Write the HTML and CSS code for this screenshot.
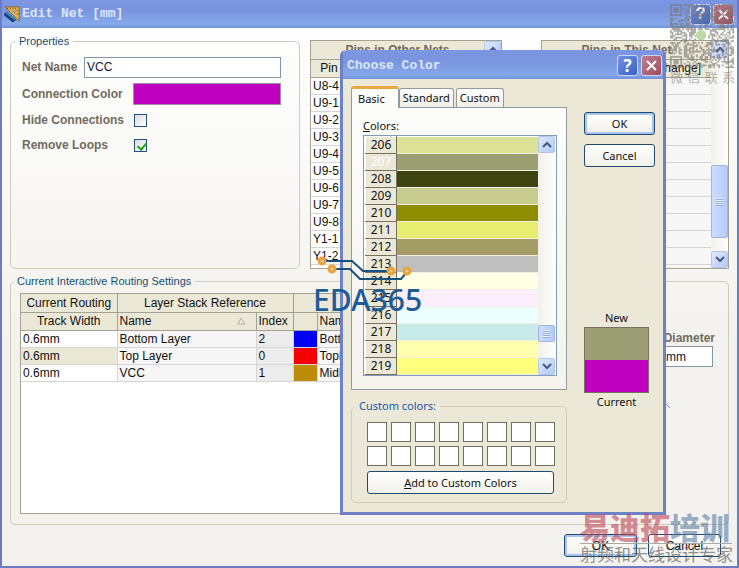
FILE: index.html
```html
<!DOCTYPE html>
<html lang="en">
<head>
  <meta charset="UTF-8">
  <meta name="viewport" content="width=device-width, initial-scale=1.0">
  <title>Edit Net [mm]</title>
  <link rel="stylesheet" href="styles.css">
</head>
<body>
  <div class="window">
    <header class="titlebar">
      <svg class="app-icon" width="16" height="16" viewBox="0 0 18 18">
        <path d="M1 1H17V17Z" fill="#e3b64c" stroke="#8a6420"/>
        <path d="M9 5H13V9Z" fill="#7f92d8"/>
        <path d="M4 2v2M7 2v2M10 2v2M13 2v2M16 5h-2M16 9h-2" stroke="#7a5518"/>
        <path d="M1 8L12 17" stroke="#16406e" stroke-width="5"/>
        <path d="M2 7L12 15" stroke="#3c8ac4" stroke-width="2"/>
      </svg>
      <h1>Edit Net [mm]</h1>
      <button class="title-button" aria-label="Help">?</button>
      <button class="title-button close" aria-label="Close">
        <svg width="13" height="13" viewBox="0 0 13 13"><path d="M2 2L11 11M11 2L2 11"/></svg>
      </button>
    </header>

    <main class="content">
      <div class="top-row">
        <fieldset class="properties">
          <legend>Properties</legend>
          <div class="row">
            <label class="short" for="net-name">Net Name</label>
            <input type="text" id="net-name" value="VCC">
          </div>
          <div class="row">
            <label for="net-color">Connection Color</label>
            <button class="net-color" id="net-color" aria-label="Connection Color"></button>
          </div>
          <div class="row check">
            <label for="hide">Hide Connections</label>
            <input type="checkbox" id="hide">
          </div>
          <div class="row check">
            <label for="loops">Remove Loops</label>
            <input type="checkbox" id="loops" checked>
          </div>
        </fieldset>

        <div class="pins other">
          <table>
            <thead>
              <tr class="caption"><th colspan="2">Pins in Other Nets</th></tr>
              <tr><th class="pin">Pin</th><th></th></tr>
            </thead>
            <tbody>
              <tr><td>U8-4</td><td></td></tr>
              <tr><td>U9-1</td><td></td></tr>
              <tr><td>U9-2</td><td></td></tr>
              <tr><td>U9-3</td><td></td></tr>
              <tr><td>U9-4</td><td></td></tr>
              <tr><td>U9-5</td><td></td></tr>
              <tr><td>U9-6</td><td></td></tr>
              <tr><td>U9-7</td><td></td></tr>
              <tr><td>U9-8</td><td></td></tr>
              <tr><td>Y1-1</td><td></td></tr>
              <tr><td>Y1-2</td><td></td></tr>
            </tbody>
          </table>
          <div class="scrollbar">
            <button aria-label="Scroll up"><svg width="10" height="7" viewBox="0 0 10 7"><path d="M1 6L5 2L9 6"/></svg></button>
            <div class="track"></div>
            <button aria-label="Scroll down"><svg width="10" height="7" viewBox="0 0 10 7"><path d="M1 1L5 5L9 1"/></svg></button>
          </div>
        </div>

        <div class="pins this">
          <table>
            <thead>
              <tr class="caption"><th>Pins in This Net</th></tr>
              <tr><th class="change">[Click to Change]</th></tr>
            </thead>
            <tbody>
              <tr><td></td></tr>
              <tr><td></td></tr>
              <tr><td></td></tr>
              <tr><td></td></tr>
              <tr><td></td></tr>
              <tr><td></td></tr>
              <tr><td></td></tr>
              <tr><td></td></tr>
              <tr><td></td></tr>
              <tr><td></td></tr>
              <tr><td></td></tr>
            </tbody>
          </table>
          <div class="scrollbar">
            <button aria-label="Scroll up"><svg width="10" height="7" viewBox="0 0 10 7"><path d="M1 6L5 2L9 6"/></svg></button>
            <div class="track"></div>
            <div class="thumb tall"></div>
            <div class="track end"></div>
            <button aria-label="Scroll down"><svg width="10" height="7" viewBox="0 0 10 7"><path d="M1 1L5 5L9 1"/></svg></button>
          </div>
        </div>
      </div>

      <fieldset class="routing">
        <legend>Current Interactive Routing Settings</legend>
        <div class="routing-grid">
          <table>
            <colgroup>
              <col class="c-width"><col class="c-name"><col class="c-index"><col class="c-color"><col>
            </colgroup>
            <thead>
              <tr><th>Current Routing</th><th colspan="2">Layer Stack Reference</th><th colspan="2"></th></tr>
              <tr>
                <th>Track Width</th>
                <th class="left">Name <svg class="sort" width="9" height="8" viewBox="0 0 9 8"><path d="M4 1L1 7H8Z" fill="none" stroke="#b5b2a3"/></svg></th>
                <th class="left">Index</th>
                <th></th>
                <th class="left">Name</th>
              </tr>
            </thead>
            <tbody>
              <tr><td>0.6mm</td><td class="ro">Bottom Layer</td><td class="index">2</td><td class="blue"></td><td class="ro">BottomLayer</td></tr>
              <tr class="selected"><td>0.6mm</td><td class="ro">Top Layer</td><td class="index">0</td><td class="red"></td><td class="ro">TopLayer</td></tr>
              <tr><td>0.6mm</td><td class="ro">VCC</td><td class="index">1</td><td class="gold"></td><td class="ro">MidLayer1</td></tr>
            </tbody>
          </table>
        </div>
        <div class="via">
          <label for="diameter">Diameter</label>
          <input type="text" id="diameter" value="mm">
          <svg width="6" height="6" viewBox="0 0 6 6"><path d="M0 0L5 5" stroke="#5d9cc4"/></svg>
        </div>
      </fieldset>

      <div class="buttons">
        <button class="btn default">OK</button>
        <button class="btn">Cancel</button>
      </div>
    </main>
  </div>

  <!-- Choose Color -->
  <div class="dialog" role="dialog" aria-labelledby="dialog-title">
    <header class="titlebar">
      <h2 id="dialog-title">Choose Color</h2>
      <button class="title-button" aria-label="Help">?</button>
      <button class="title-button close" aria-label="Close">
        <svg width="13" height="13" viewBox="0 0 13 13"><path d="M2 2L11 11M11 2L2 11"/></svg>
      </button>
    </header>
    <div class="dialog-body">
      <div class="picker">
        <div class="tabs">
          <button class="tab active">Basic</button>
          <button class="tab">Standard</button>
          <button class="tab">Custom</button>
        </div>
        <div class="panel">
          <div class="list-label"><u>C</u>olors:</div>
          <div class="color-list">
            <table><tbody id="colors"></tbody></table>
            <div class="scrollbar">
              <button aria-label="Scroll up"><svg width="10" height="7" viewBox="0 0 10 7"><path d="M1 6L5 2L9 6"/></svg></button>
              <div class="track"></div>
              <div class="thumb"></div>
              <div class="track end"></div>
              <button aria-label="Scroll down"><svg width="10" height="7" viewBox="0 0 10 7"><path d="M1 1L5 5L9 1"/></svg></button>
            </div>
          </div>
        </div>
        <fieldset class="custom">
          <legend>Custom colors:</legend>
          <div class="slots" id="slots"></div>
          <button class="btn"><span><u>A</u>dd to Custom Colors</span></button>
        </fieldset>
      </div>
      <div class="side">
        <button class="btn default">OK</button>
        <button class="btn">Cancel</button>
        <div class="preview">
          <span>New</span>
          <div class="preview-box">
            <div class="new"></div>
            <div class="current"></div>
          </div>
          <span>Current</span>
        </div>
      </div>
    </div>
  </div>

  <!-- Watermarks -->
  <div class="eda">
    <svg width="112" height="28" viewBox="0 0 112 28">
      <path d="M9 7H39L50 17H78M19 15H37L47 25H88L94 18" fill="none" stroke="#17507f" stroke-width="2"/>
      <g fill="#d9cba8" stroke="#e8a33d" stroke-width="3">
        <circle cx="9" cy="7" r="3"/>
        <circle cx="19" cy="15" r="3"/>
        <circle cx="78" cy="17" r="3"/>
        <circle cx="94" cy="17" r="3"/>
      </g>
    </svg>
    <div class="eda-name">EDA365</div>
  </div>

  <div class="wechat">
    <svg id="qr" width="64" height="64" viewBox="0 0 37 37"></svg>
    <div class="wechat-text"><span>微</span><span>信</span><span>联</span><span>系</span></div>
  </div>

  <div class="brand">
    <div class="brand-name">易迪拓<span>培训</span></div>
    <div class="brand-sub">射频和天线设计专家</div>
  </div>

  <script src="script.js"></script>
</body>
</html>
```
FILE: styles.css
```css
* {
  box-sizing: border-box;
}

body {
  margin: 0;
  position: relative;
  font-family: "Liberation Sans", Arial, sans-serif;
  font-size: 12px;
  line-height: 14px;
  color: #111;
}

button, input {
  font: inherit;
  color: inherit;
  margin: 0;
}

button {
  padding: 0;
}

.window {
  min-height: 100vh;
  display: flex;
  flex-direction: column;
  background: linear-gradient(#ffffff, #f3f2ee 60%);
  border: 2px solid #6d7bc2;
  border-top: 0;
}

/* Title bars */
.titlebar {
  height: 28px;
  padding: 0 3px 0 2px;
  display: flex;
  align-items: center;
  gap: 2px;
  background: linear-gradient(#7b96e2, #7a94df 40%, #86a9ea 85%, #7591dc);
}

.titlebar h1, .titlebar h2 {
  flex: 1;
  margin: 0;
  font-family: "Liberation Mono", monospace;
  font-size: 13px;
  font-weight: bold;
  color: #dbe6fb;
}

.title-button {
  width: 21px;
  height: 21px;
  display: flex;
  align-items: center;
  justify-content: center;
  border: 1px solid #c9d8f8;
  border-radius: 3px;
  background: linear-gradient(135deg, #7390e6, #3a60c4);
  color: #fff;
  font-size: 17px;
  font-weight: bold;
}

.title-button.close {
  background: linear-gradient(135deg, #c08090, #a04a5c);
}

.title-button path {
  stroke: #fff;
  stroke-width: 2;
}

/* Main form */
.content {
  flex: 1;
  display: flex;
  flex-direction: column;
  padding: 6px 8px 9px;
}

.top-row {
  display: grid;
  grid-template-columns: 290fr 202fr 227fr;
  height: 235px;
}

fieldset {
  margin: 0;
  border: 1px solid #cdcbbb;
  border-radius: 5px;
  min-width: 0;
}

legend {
  padding: 0 4px;
  font-size: 11px;
  color: #15506f;
}

.properties {
  display: flex;
  flex-direction: column;
  gap: 5px;
  padding: 8px 18px 0 11px;
}

.properties legend,
.routing legend {
  margin-left: -7px;
}

.row {
  height: 22px;
  display: flex;
  align-items: center;
}

.row label, .via label {
  width: 111px;
  font-weight: bold;
  color: #716b5e;
}

.row label.short {
  width: 62px;
}

.row.check {
  height: 20px;
}

input[type="text"] {
  flex: 1;
  min-width: 0;
  height: 21px;
  padding: 0 2px;
  border: 1px solid #8197a8;
  background: #fff;
  color: #15153a;
}

input[type="checkbox"] {
  appearance: none;
  width: 13px;
  height: 13px;
  margin-left: 1px;
  border: 1px solid #1d5180;
  background: linear-gradient(135deg, #dcdcd7, #fff);
}

input[type="checkbox"]:checked::after {
  content: "";
  display: block;
  width: 4px;
  height: 7px;
  margin: 1px 0 0 4px;
  border: solid #21a121;
  border-width: 0 2px 2px 0;
  transform: rotate(40deg);
}

.net-color {
  flex: 1;
  height: 22px;
  border: 1px solid #a58aa5;
  background: #bf00bf;
}

/* Tables */
table {
  border-collapse: collapse;
  table-layout: fixed;
}

th, td {
  height: 17px;
  padding: 0 2px;
  overflow: hidden;
  white-space: nowrap;
  font-weight: normal;
  text-align: left;
  border-bottom: 1px solid #d5d5d5;
}

th {
  text-align: center;
  background: #ebe8d8;
  border: 1px solid #a5a292;
}

.pins {
  min-width: 0;
  margin-top: 6px;
  display: flex;
  align-items: flex-start;
  border: 1px solid #a5a292;
  background: #fff;
}

.pins.other {
  margin-left: 10px;
}

.pins.this {
  margin-left: 39px;
  background: #f7f7f7;
}

.pins table {
  flex: 1;
  min-width: 0;
}

.pins th {
  height: 18px;
  border-width: 0 0 1px;
}

.pins .caption th {
  font-weight: bold;
  color: #716b5e;
}

.pins .pin {
  width: 36px;
}

.pins th.change {
  text-align: right;
  padding-right: 10px;
}

/* Scroll bars */
.scrollbar {
  align-self: stretch;
  width: 17px;
  display: flex;
  flex-direction: column;
  background: linear-gradient(90deg, #f1f0ea, #fefefb);
}

.scrollbar button {
  height: 17px;
  display: flex;
  align-items: center;
  justify-content: center;
  border: 1px solid #b3c6ee;
  border-radius: 2px;
  background: linear-gradient(135deg, #dfe9ff, #b3caf5);
}

.scrollbar path {
  fill: none;
  stroke: #44597f;
  stroke-width: 2;
}

.track {
  flex: 1;
}

.track.end {
  flex: none;
  height: 13px;
}

.thumb {
  height: 17px;
  display: flex;
  align-items: center;
  justify-content: center;
  border: 1px solid #9db5e0;
  border-radius: 2px;
  background: linear-gradient(90deg, #cbdcff, #b5cbf8);
}

.thumb::after {
  content: "";
  width: 7px;
  height: 8px;
  background: repeating-linear-gradient(#eef4ff 0 1px, #8fa9dc 1px 2px);
}

.thumb.tall {
  height: 73px;
}

/* Routing settings */
.routing {
  flex: 1;
  display: flex;
  gap: 15px;
  margin-top: 5px;
  padding: 5px 15px 10px 9px;
}

.routing-grid {
  flex: 1;
  min-width: 0;
  min-height: 221px;
  overflow: hidden;
  border: 1px solid #a5a292;
  background: #fff;
}

.routing-grid table {
  width: 100%;
}

.routing-grid th {
  height: 18px;
  border-width: 0 1px 1px 0;
}

.routing-grid th.left {
  text-align: left;
}

.routing-grid td {
  border-right: 1px solid #d5d5d5;
}

.routing-grid .c-width { width: 96px; }
.routing-grid .c-name { width: 139px; }
.routing-grid .c-index { width: 37px; }
.routing-grid .c-color { width: 24px; }

.sort {
  float: right;
  margin: 3px 8px 0 0;
}

.selected td:first-child { background: #ebe8d8; }

td.ro { background: #f6f6f6; }
td.index { background: #ececec; }
td.blue { background: #0000f5; }
td.red { background: #f50000; }
td.gold { background: #bd8c09; }

.via {
  width: 72px;
  padding-top: 38px;
  display: flex;
  flex-direction: column;
}

.via label {
  width: auto;
  margin: 0 -2px 1px 0;
  text-align: right;
}

.via input[type="text"] {
  flex: none;
  padding-left: 24px;
}

.via svg {
  margin: 36px 0 0 24px;
}

.buttons {
  display: flex;
  justify-content: flex-end;
  gap: 11px;
  margin-top: 9px;
  padding-right: 8px;
}

.btn {
  width: 73px;
  height: 23px;
  border: 1px solid #1f4b6e;
  border-radius: 3px;
  background: linear-gradient(#fff, #f1f0ea);
}

.btn.default {
  box-shadow: inset 0 0 0 2px #a9c4ee;
}

/* Choose Color dialog */
.dialog {
  position: absolute;
  left: 340px;
  top: 50px;
  width: 326px;
  border: 3px solid #6f81c5;
  border-top: 0;
  border-radius: 6px 6px 0 0;
  background: #ebe8d8;
  font-family: "Noto Sans", Tahoma, sans-serif;
  font-size: 11px;
}

.dialog .titlebar {
  height: 29px;
  padding: 2px 1px 0 4px;
  gap: 3px;
  border-radius: 5px 5px 0 0;
}

.dialog-body {
  display: flex;
  justify-content: space-between;
  padding: 7px 8px 9px;
}

.picker {
  width: 216px;
}

.tabs {
  display: flex;
  align-items: flex-end;
}

.tab {
  height: 19px;
  margin-right: 2px;
  padding: 0 3px;
  border: 1px solid #919b9c;
  border-bottom: 0;
  border-radius: 3px 3px 0 0;
  background: linear-gradient(#fff, #f0efe8);
}

.tab.active {
  position: relative;
  height: 22px;
  margin: 0 0 -1px;
  padding: 0 13px 0 6px;
  border-top: 3px solid #e9a83f;
  background: #fcfcfb;
}

.panel {
  padding: 11px 9px 13px 11px;
  border: 1px solid #919b9c;
  background: linear-gradient(#fcfcfb, #f4f3ee);
}

.list-label {
  margin-bottom: 2px;
}

.color-list {
  display: flex;
  padding: 0 1px;
  border: 1px solid #7f9db9;
  background: #fff;
}

.color-list table {
  flex: 1;
}

.color-list th {
  width: 31px;
  font-size: 12px;
  border: 1px solid #77705c;
  border-top-color: #fff;
  border-left-color: #fff;
}

.color-list td {
  border-bottom: 1px solid #f1efe2;
}

.color-list .picked th {
  color: #fff;
}

.color-list .track.end {
  height: 16px;
}

.custom {
  margin-top: 9px;
  padding: 9px 12px 8px 15px;
}

.custom legend {
  margin-left: -12px;
  color: #1b55a8;
}

.slots {
  display: grid;
  grid-template-columns: repeat(8, 20px);
  gap: 4px;
  margin-bottom: 5px;
}

.slots button {
  height: 20px;
  border: 1px solid #716f5b;
  background: #fff;
}

.custom .btn {
  width: 100%;
}

.side {
  width: 71px;
  padding-top: 26px;
  display: flex;
  flex-direction: column;
  gap: 9px;
}

.side .btn {
  width: 100%;
}

.preview {
  margin-top: 135px;
  width: 65px;
  text-align: center;
}

.preview-box {
  margin: 2px 0;
  border: 1px solid #77705c;
}

.preview-box div {
  height: 32px;
}

.preview-box .new { background: #9c9f73; }
.preview-box .current { background: #bf00bf; }

/* Watermarks lie over everything */
.eda, .wechat, .brand {
  position: absolute;
  pointer-events: none;
}

.eda {
  left: 313px;
  top: 254px;
}

.eda svg {
  display: block;
}

.eda-name {
  font-family: "Noto Sans", sans-serif;
  font-size: 30px;
  font-weight: 500;
  line-height: 36px;
  color: #1c5c99;
}

.wechat {
  right: 4px;
  top: 4px;
  width: 65px;
  opacity: 0.6;
}

.wechat svg {
  display: block;
}

.wechat-text {
  display: flex;
  justify-content: space-between;
  font-family: "Noto Sans CJK SC", sans-serif;
  font-size: 13px;
  line-height: 18px;
  color: #85857f;
}

.brand {
  right: 7px;
  bottom: 4px;
  width: 152px;
  font-family: "Noto Sans CJK SC", sans-serif;
  white-space: nowrap;
}

.brand-name {
  font-size: 30px;
  font-weight: 900;
  line-height: 34px;
  color: rgba(190, 70, 85, 0.6);
  border-bottom: 1px solid #a9a9a9;
}

.brand-name span {
  color: rgba(90, 125, 165, 0.6);
}

.brand-sub {
  font-size: 17px;
  line-height: 20px;
  color: rgba(85, 85, 85, 0.65);
}
```
FILE: script.js
```js
const colors = [
  [206, "#dce397"], [207, "#9c9f73"], [208, "#3e4510"], [209, "#c8cb8e"],
  [210, "#8e8e00"], [211, "#e6ed70"], [212, "#a49d65"], [213, "#bfbfbf"],
  [214, "#ffffe6"], [215, "#fdeefd"], [216, "#ecffff"], [217, "#c8eae8"],
  [218, "#ffffae"], [219, "#ffff7d"]
];

document.getElementById("colors").innerHTML = colors.map(([id, color]) =>
  `<tr class="${id === 207 ? "picked" : ""}"><th>${id}</th><td style="background:${color}"></td></tr>`
).join("");

document.getElementById("slots").innerHTML = Array.from({ length: 16 }, (_, i) =>
  `<button aria-label="Custom color ${i + 1}"></button>`
).join("");

// QR code modules
const size = 37;
let seed = 365;
let path = "";

function random() {
  seed = (seed * 1103515245 + 12345) % 2147483648;
  return seed / 2147483648;
}

for (let y = 0; y < size; y++) {
  for (let x = 0; x < size; x++) {
    const finder = (x < 8 && y < 8) || (x > 28 && y < 8) || (x < 8 && y > 28);
    const middle = x > 14 && x < 22 && y > 14 && y < 22;
    if (!finder && !middle && random() > 0.5) {
      path += `M${x} ${y}h1v1h-1z`;
    }
  }
}

let shapes = `<path d="${path}" fill="#77756c"/>`;
[[0, 0], [30, 0], [0, 30]].forEach(([x, y]) => {
  shapes += `<rect x="${x + 0.5}" y="${y + 0.5}" width="6" height="6" fill="none" stroke="#77756c"/>`;
  shapes += `<rect x="${x + 2}" y="${y + 2}" width="3" height="3" fill="#77756c"/>`;
});
shapes += `<circle cx="18" cy="18" r="3" fill="#8fc46a"/>`;
document.getElementById("qr").innerHTML = shapes;
```
